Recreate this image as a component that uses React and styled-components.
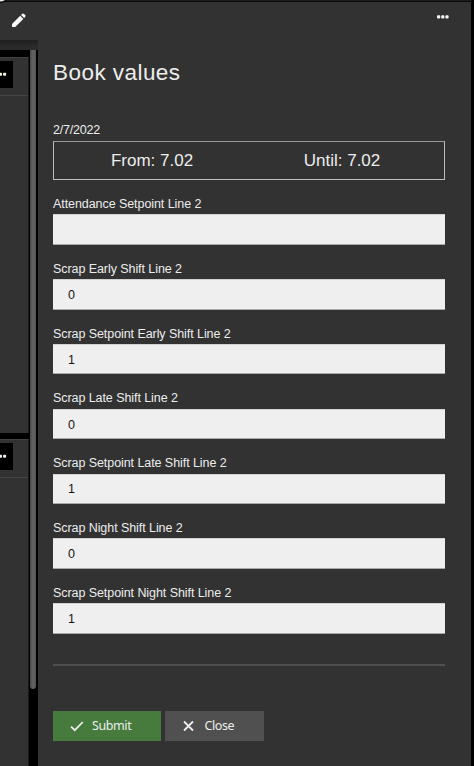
import React from "react";
import styled, { createGlobalStyle } from "styled-components";

const GlobalStyle = createGlobalStyle`
  * { box-sizing: border-box; }
  body { margin: 0; background: #000; font-family: "Liberation Sans", Arial, sans-serif; }
`;

const Screen = styled.div`
  position: relative;
  display: grid;
  grid-template-columns: 38px 433px;
  width: 474px;
  height: 766px;
  overflow: hidden;
  background: #000;
`;

const Rail = styled.div`
  display: flex;
  flex-direction: column;
  height: 766px;
`;

const EditTab = styled.div`
  height: 40px;
  flex: none;
  padding: 11px 0 0 10px;
  background: #323232;
  border-top: 1px solid #1d1d1d;
  box-shadow: inset 0 1px 0 #080808;
`;

const TabShadow = styled.div`
  height: 10px;
  flex: none;
  background: linear-gradient(#1f1f1f, #292929 60%, #2b2b2b);
`;

const RailBody = styled.div`
  display: grid;
  grid-template-columns: 29px 9px;
  flex: 1;
`;

const Tiles = styled.div`
  display: grid;
  grid-template-rows: 376px 327px;
  gap: 6px;
  padding-top: 7px;
  background: #000;
`;

const Tile = styled.div`
  background: #323232;
  border-top: 1px solid #414141;
  border-right: 1px solid #1a1a1a;
`;

const TileHeader = styled.div`
  height: 38px;
  padding-top: 3px;
  border-bottom: 1px solid #454545;
`;

const TileMenu = styled.div`
  width: 13px;
  height: 27px;
  padding-top: 11px;
  background: #000;
`;

const ScrollTrack = styled.div`
  background: #000;
  padding-left: 1px;
`;

const ScrollThumb = styled.div`
  width: 6px;
  height: 639px;
  border-radius: 0 0 3px 3px;
  background: linear-gradient(90deg, #4b4b4b, #626262 50%, #565656);
`;

const Panel = styled.main`
  display: flex;
  flex-direction: column;
  height: 766px;
  padding: 0 26px 0 15px;
  background: #323232;
  border-top: 1px solid #1d1d1d;
  box-shadow: inset 0 1px 0 #080808;
  color: #ededed;
`;

const PanelTools = styled.div`
  display: flex;
  justify-content: flex-end;
  height: 58px;
  flex: none;
  padding: 14px 0 0;
  margin-right: -5px;
`;

const Title = styled.h1`
  height: 63px;
  margin: 0;
  font-size: 22.5px;
  font-weight: 400;
  line-height: 28px;
  letter-spacing: 0.45px;
`;

const DateLabel = styled.div`
  height: 19px;
  font-size: 12.5px;
  line-height: 16px;
  letter-spacing: -0.2px;
`;

const Range = styled.div`
  display: grid;
  grid-template-columns: 1fr 1fr;
  padding: 0 7px 0 3px;
  height: 39px;
  flex: none;
  border: 1px solid #bdbdbd;
  border-top-color: #999;
  font-size: 17px;
  line-height: 37px;
  text-align: center;
`;

const Fields = styled.div`
  display: grid;
  grid-auto-rows: 64.8px;
  height: 484px;
  flex: none;
  padding-top: 16px;
`;

const Field = styled.label`
  display: grid;
  grid-template-rows: 18.4px 30.5px;
  font-size: 12.5px;
  line-height: 16px;
  letter-spacing: -0.07px;
`;

const Input = styled.input`
  width: 100%;
  height: 30.5px;
  margin: 0;
  padding: 1px 15px 0;
  border: 0;
  border-top: 1px solid #d2d2d2;
  border-bottom: 1px solid #aaa;
  border-radius: 0;
  outline: 0;
  background: #efefef;
  color: #151515;
  font: 12.5px "Liberation Sans", Arial, sans-serif;
`;

const Divider = styled.hr`
  width: 100%;
  height: 2px;
  flex: none;
  margin: 0 0 45px;
  border: 0;
  background: #4f4f4f;
`;

const Actions = styled.div`
  display: flex;
  gap: 4px;
`;

const Button = styled.button`
  display: flex;
  align-items: center;
  gap: ${(p) => p.$gap}px;
  width: ${(p) => p.$width}px;
  height: 30px;
  padding: 0 0 1px 17px;
  border: 0;
  background: ${(p) => (p.$primary ? "#467b3d" : "#505050")};
  color: #ededed;
  font: 12.5px "Noto Sans", sans-serif;
  letter-spacing: -0.4px;
`;

const fields = [
  ["Attendance Setpoint Line 2", ""],
  ["Scrap Early Shift Line 2", "0"],
  ["Scrap Setpoint Early Shift Line 2", "1"],
  ["Scrap Late Shift Line 2", "0"],
  ["Scrap Setpoint Late Shift Line 2", "1"],
  ["Scrap Night Shift Line 2", "0"],
  ["Scrap Setpoint Night Shift Line 2", "1"],
];

const Corner = styled.svg`
  position: absolute;
  top: 0;
  left: 0;
`;

const PencilIcon = () => (
  <svg width="18" height="18" viewBox="0 0 18 18" fill="#f7f7f7">
    <path d="M2 12 10.2 3.8 13.4 7 5.2 15H2zM11 3 12.3 1.8Q13.2 1.2 14 1.9L15.2 3Q16 3.8 15.3 4.7L14.2 6z" />
  </svg>
);

const MoreIcon = () => (
  <svg width="13" height="4" viewBox="0 0 13 4" fill="#f5f5f5">
    <rect x="0" y="0.2" width="3.2" height="3.2" rx="0.9" />
    <rect x="4.2" y="0.2" width="3.2" height="3.2" rx="0.9" />
    <rect x="8.4" y="0.2" width="3.2" height="3.2" rx="0.9" />
  </svg>
);

const TileDots = () => (
  <svg width="7" height="4" viewBox="0 0 7 4" fill="#f5f5e8" display="block">
    <rect x="-1" y="0.7" width="3" height="3" rx="0.8" />
    <rect x="3.1" y="0.7" width="3" height="3" rx="0.8" />
  </svg>
);

const TileCard = () => (
  <Tile>
    <TileHeader>
      <TileMenu><TileDots /></TileMenu>
    </TileHeader>
  </Tile>
);

export default function App() {
  return (
    <Screen>
      <GlobalStyle />
      <Rail>
        <EditTab><PencilIcon /></EditTab>
        <TabShadow />
        <RailBody>
          <Tiles>
            <TileCard />
            <TileCard />
          </Tiles>
          <ScrollTrack><ScrollThumb /></ScrollTrack>
        </RailBody>
      </Rail>
      <Panel>
        <PanelTools><MoreIcon /></PanelTools>
        <Title>Book values</Title>
        <DateLabel>2/7/2022</DateLabel>
        <Range><span>From: 7.02</span><span>Until: 7.02</span></Range>
        <Fields>
          {fields.map(([label, value]) => (
            <Field key={label}>
              {label}
              <Input defaultValue={value} />
            </Field>
          ))}
        </Fields>
        <Divider />
        <Actions>
          <Button $primary $width={108} $gap={8}>
            <svg width="14" height="12" viewBox="0 0 14 12" fill="none" stroke="currentColor" strokeWidth="1.7"><path d="M1 6.6 4.8 10.2 12.8 2" /></svg>
            Submit
          </Button>
          <Button $width={99} $gap={10.5}>
            <svg width="12" height="12" viewBox="0 0 12 12" fill="none" stroke="currentColor" strokeWidth="1.8"><path d="M2 1.5 11 10.5M11 1.5 2 10.5" /></svg>
            Close
          </Button>
        </Actions>
      </Panel>
      <Corner width="7" height="4" viewBox="0 0 7 4">
        <path d="M0 0H6Q4 3 0 3z" fill="#080808" />
        <path d="M0 0H5Q3 1.5 0 1.5z" fill="#eee" />
      </Corner>
    </Screen>
  );
}
